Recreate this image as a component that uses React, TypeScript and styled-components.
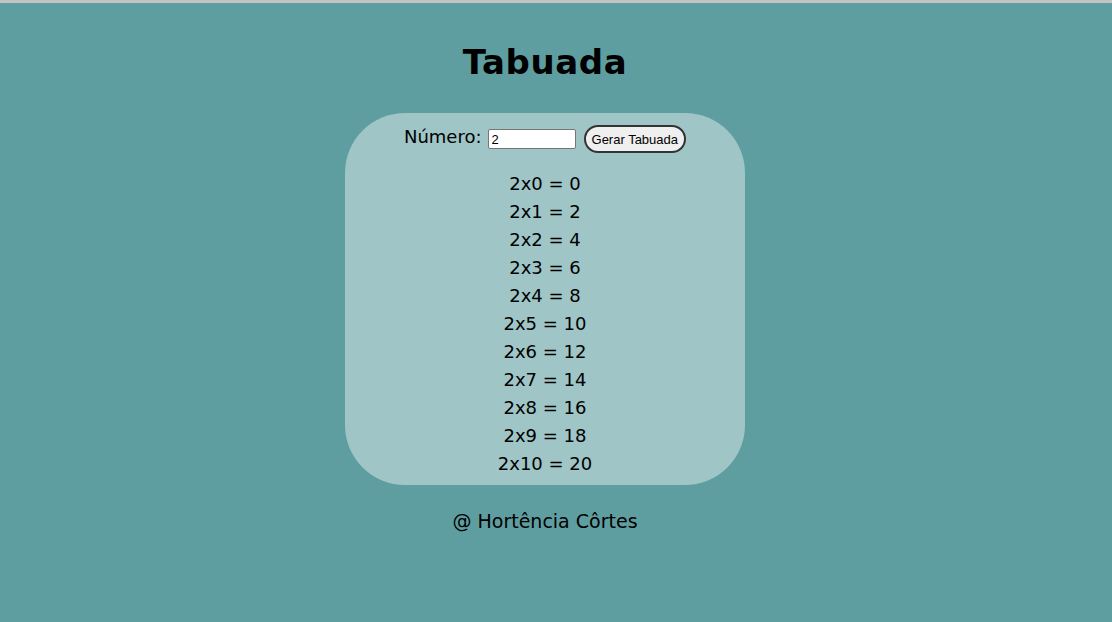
import styled, { createGlobalStyle } from 'styled-components'

const numero = 2
const linhas = Array.from({ length: 11 }, (_, i) => i)

const GlobalStyle = createGlobalStyle`
  html {
    border-top: 3px solid #c4c4c4;
  }
  body {
    margin: 0;
    min-height: 619px;
    background: #5f9ea0;
    font-family: 'DejaVu Sans', 'Noto Sans', sans-serif;
    color: #000;
  }
`

const Page = styled.div`
  width: 1090px;
  display: flex;
  flex-direction: column;
  align-items: center;
`

const Title = styled.h1`
  margin: 36px 0 28px;
  font-size: 34px;
  line-height: 46px;
  font-weight: bold;
  letter-spacing: 0.6px;
`

const Card = styled.main`
  width: 400px;
  height: 372px;
  box-sizing: border-box;
  padding-top: 12px;
  border-radius: 60px;
  background: rgba(255, 255, 255, 0.4);
  display: flex;
  flex-direction: column;
  align-items: center;
`

const Form = styled.div`
  display: flex;
  align-items: center;
  gap: 6px;
  font-size: 18px;
  height: 28px;
`

const Label = styled.span`
  margin-bottom: 6px;
`

const Input = styled.input`
  width: 88px;
  height: 20px;
  box-sizing: border-box;
  padding: 1px 3px;
  font-family: 'Liberation Sans', Arial, sans-serif;
  font-size: 13px;
  border: 1px solid #767676;
  border-radius: 2px;
  background: #fff;
`

const Button = styled.button`
  margin-left: 2px;
  height: 28px;
  padding: 0 6px;
  font-family: 'Liberation Sans', Arial, sans-serif;
  font-size: 13px;
  color: #000;
  background: #efefef;
  border: 2px solid #333;
  border-radius: 14px;
`

const List = styled.div`
  margin-top: 17px;
  display: flex;
  flex-direction: column;
  align-items: center;
  font-size: 18px;
  line-height: 28px;
`

const Footer = styled.footer`
  margin-top: 22px;
  font-size: 19px;
  line-height: 28px;
`

export default function App() {
  return (
    <>
      <GlobalStyle />
      <Page>
        <Title>Tabuada</Title>
        <Card>
          <Form>
            <Label>Número:</Label>
            <Input defaultValue={numero} />
            <Button>Gerar Tabuada</Button>
          </Form>
          <List>
            {linhas.map((i) => (
              <div key={i}>
                {numero}x{i} = {numero * i}
              </div>
            ))}
          </List>
        </Card>
        <Footer>@ Hortência Côrtes</Footer>
      </Page>
    </>
  )
}
